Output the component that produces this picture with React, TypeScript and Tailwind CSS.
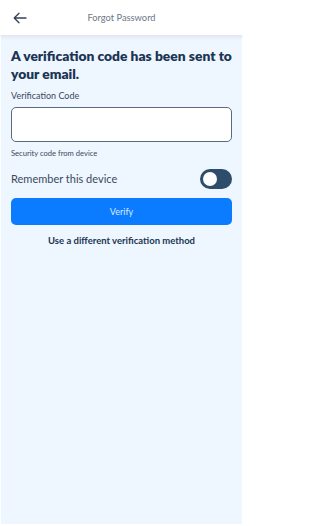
import { useState } from "react";

export default function App() {
  const [code, setCode] = useState("");
  const [remember, setRemember] = useState(false);

  return (
    <div
      className="w-[243px] h-[526px] bg-white flex flex-col overflow-hidden"
      style={{ fontFamily: "Lato, 'Noto Sans', sans-serif" }}
    >
      {/* Header */}
      <div className="relative z-10 h-[35px] shrink-0 bg-white flex items-center px-3 shadow-[0_2px_4px_rgba(15,23,42,0.08)]">
        <button className="w-4 h-4 flex items-center justify-center text-[#334155]">
          <svg width="14" height="12" viewBox="0 0 14 12" fill="none">
            <path
              d="M13 6H1.5M6 1.2L1.2 6L6 10.8"
              stroke="currentColor"
              strokeWidth="1.3"
              strokeLinecap="round"
              strokeLinejoin="round"
            />
          </svg>
        </button>
        <div className="flex-1 text-center text-[9.3px] text-[#6b7785] pr-4">
          Forgot Password
        </div>
      </div>

      {/* Content */}
      <div className="flex-1 mx-px mb-[2px] bg-[#eef6ff] px-[10px] pt-[12px]">
        <h1 className="whitespace-nowrap text-[13.8px] leading-[18px] font-extrabold text-[#1b3553]">
          A verification code has been sent to
          <br />
          your email.
        </h1>

        <label className="block mt-[7px] text-[9px] leading-3 text-[#3b4a5c]">
          Verification Code
        </label>
        <input
          value={code}
          onChange={(e) => setCode(e.target.value)}
          className="mt-[5px] block w-full h-[35px] rounded-[5px] border border-[#5b6b7c] bg-white px-2 text-[12px] outline-none"
        />
        <p className="mt-[6px] text-[7.6px] leading-[10px] text-[#3b4a5c]">
          Security code from device
        </p>

        <div className="mt-[11px] flex items-center justify-between">
          <span className="text-[11px] text-[#3b4a5c]">Remember this device</span>
          <button
            onClick={() => setRemember(!remember)}
            className="w-[32px] h-[20px] rounded-full bg-[#2d4d6a] flex items-center px-[3px]"
          >
            <span className="w-[14px] h-[14px] rounded-full bg-white" />
          </button>
        </div>

        <button className="mt-[9px] w-full h-[27px] rounded-[5px] bg-[#0b7bff] text-[9px] text-[#dbeafe]">
          Verify
        </button>

        <p className="mt-[9px] text-center text-[9.5px] font-bold text-[#1b3553]">
          Use a different verification method
        </p>
      </div>
    </div>
  );
}
